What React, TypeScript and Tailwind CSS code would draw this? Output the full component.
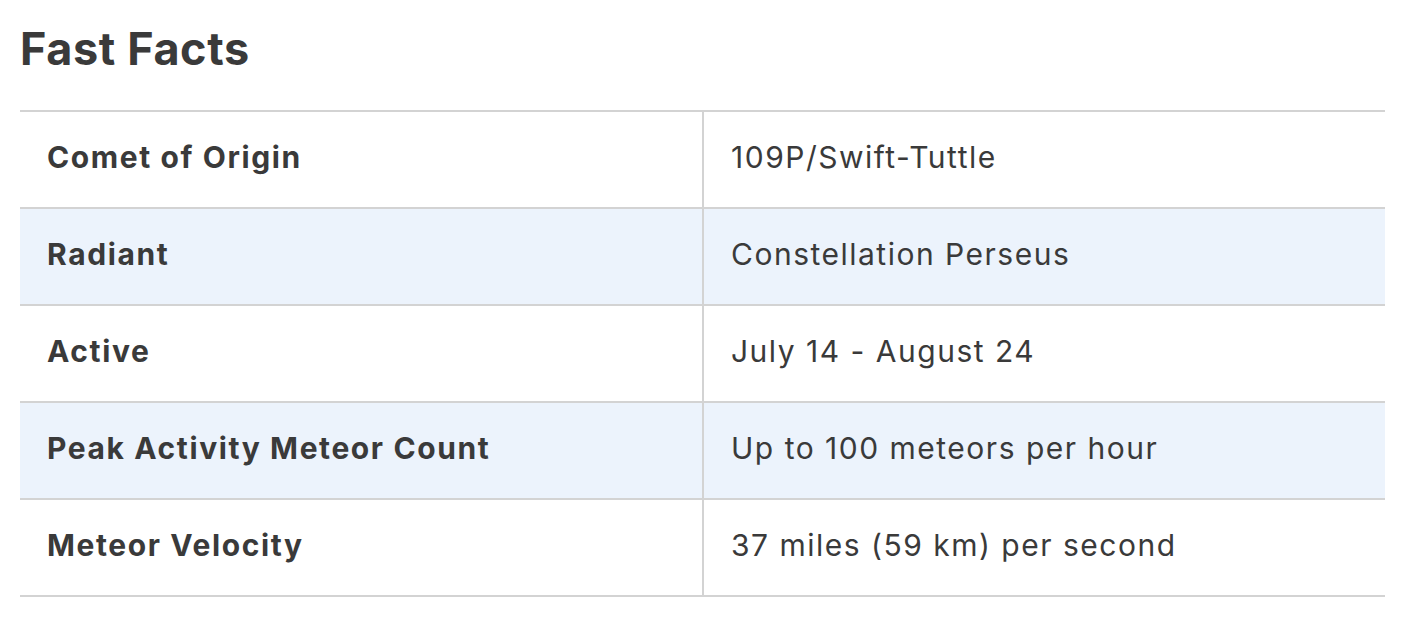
import React from "react";

const facts = [
  { label: "Comet of Origin", value: "109P/Swift-Tuttle" },
  { label: "Radiant", value: "Constellation Perseus" },
  { label: "Active", value: "July 14 - August 24" },
  { label: "Peak Activity Meteor Count", value: "Up to 100 meteors per hour" },
  { label: "Meteor Velocity", value: "37 miles (59 km) per second" },
];

const App = () => {
  return (
    <div className="w-[1412px] h-[626px] bg-white text-[#3a3a3a] font-['Inter',sans-serif] px-5 pt-[20px]">
      <h2 className="text-[45px] leading-[58px] font-bold tracking-[0.6px]">Fast Facts</h2>
      <div className="mt-[32px] w-[1365px] border-t-2 border-[#d3d3d3]">
        {facts.map((fact, index) => (
          <div
            key={index}
            className={`flex h-[97px] border-b-2 border-[#d3d3d3] ${
              index % 2 === 1 ? "bg-[#ecf3fc]" : "bg-white"
            }`}
          >
            <div className="w-[682px] flex items-center pl-[27px] pb-[4px] text-[30px] font-bold tracking-[1.6px]">
              {fact.label}
            </div>
            <div className="flex-1 flex items-center pl-[27px] pb-[4px] border-l-2 border-[#d3d3d3] text-[30px] tracking-[1.5px]">
              {fact.value}
            </div>
          </div>
        ))}
      </div>
    </div>
  );
};

export default App;
